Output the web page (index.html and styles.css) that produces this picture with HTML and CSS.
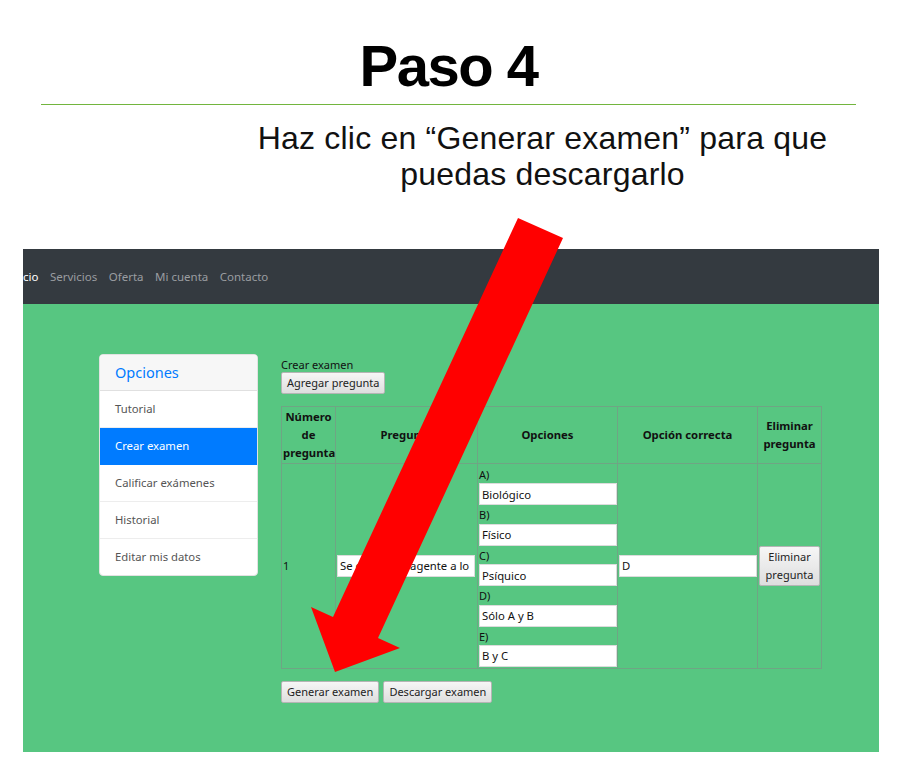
FILE: index.html
```html
<!DOCTYPE html>
<html lang="es">
<head>
<meta charset="utf-8">
<title>Paso 4</title>
<link rel="stylesheet" href="styles.css">
</head>
<body>
<div class="slide">
  <h1 class="title">Paso 4</h1>
  <div class="rule"></div>
  <p class="subtitle">Haz clic en “Generar examen” para que<br>puedas descargarlo</p>

  <div class="shot">
    <nav class="navbar">
      <span class="nav-link active">cio</span>
      <span class="nav-link">Servicios</span>
      <span class="nav-link">Oferta</span>
      <span class="nav-link">Mi cuenta</span>
      <span class="nav-link">Contacto</span>
    </nav>
    <main class="page">
      <aside class="card">
        <div class="card-header">Opciones</div>
        <div class="list-item">Tutorial</div>
        <div class="list-item current">Crear examen</div>
        <div class="list-item">Calificar exámenes</div>
        <div class="list-item">Historial</div>
        <div class="list-item">Editar mis datos</div>
      </aside>
      <section class="content">
        <div class="heading">Crear examen</div>
        <button class="btn">Agregar pregunta</button>
        <table class="exam">
          <colgroup>
            <col class="c1"><col class="c2"><col class="c3"><col class="c4"><col class="c5">
          </colgroup>
          <thead>
            <tr>
              <th>Número de pregunta</th>
              <th>Pregunta</th>
              <th>Opciones</th>
              <th>Opción correcta</th>
              <th>Eliminar pregunta</th>
            </tr>
          </thead>
          <tbody>
            <tr>
              <td>1</td>
              <td><input class="field" value="Se considera agente a lo"></td>
              <td class="opts">
                <div class="opt-label">A)</div><input class="field" value="Biológico">
                <div class="opt-label">B)</div><input class="field" value="Físico">
                <div class="opt-label">C)</div><input class="field" value="Psíquico">
                <div class="opt-label">D)</div><input class="field" value="Sólo A y B">
                <div class="opt-label">E)</div><input class="field" value="B y C">
              </td>
              <td><input class="field" value="D"></td>
              <td class="del"><button class="btn btn-del">Eliminar pregunta</button></td>
            </tr>
          </tbody>
        </table>
        <div class="actions">
          <button class="btn">Generar examen</button>
          <button class="btn">Descargar examen</button>
        </div>
      </section>
    </main>
  </div>

  <svg class="arrow" width="897" height="775" viewBox="0 0 897 775">
    <polygon points="518,218 563,238 378,638 400,648 335,672 311,607 333,617" fill="#ff0000"/>
  </svg>
</div>
</body>
</html>
```

FILE: styles.css
```css
html, body {
  margin: 0;
  padding: 0;
  background: #ffffff;
}

.slide {
  position: relative;
  width: 897px;
  height: 775px;
  overflow: hidden;
  font-family: "Liberation Sans", Arial, sans-serif;
}

.title {
  margin: 0;
  padding-top: 34px;
  height: 64px;
  text-align: center;
  font-family: "Liberation Sans", Arial, sans-serif;
  font-weight: bold;
  font-size: 58px;
  line-height: 64px;
  letter-spacing: -1.5px;
  color: #000;
}

.rule {
  margin: 6px 0 0 41px;
  width: 815px;
  height: 1px;
  background: #72b53e;
}

.subtitle {
  margin: 15px 0 0 188px;
  width: 709px;
  text-align: center;
  font-size: 32px;
  line-height: 36px;
  letter-spacing: 0.2px;
  color: #111;
}

.shot {
  margin: 57px 0 0 23px;
  width: 856px;
  height: 503px;
  display: flex;
  flex-direction: column;
  font-family: "Noto Sans", "Open Sans", sans-serif;
  font-size: 11px;
}

.navbar {
  height: 55px;
  background: #343a40;
  display: flex;
  align-items: center;
  gap: 11.5px;
  flex-shrink: 0;
}

.nav-link {
  color: #9a9da1;
  font-size: 11.5px;
}

.nav-link.active {
  color: #ffffff;
}

.page {
  flex: 1;
  background: #57c681;
  display: flex;
  align-items: flex-start;
  padding: 50px 0 0 76px;
  gap: 23px;
}

.card {
  box-sizing: border-box;
  width: 159px;
  background: #fff;
  border: 1px solid #e2e2e2;
  border-radius: 4px;
  overflow: hidden;
  flex-shrink: 0;
}

.card-header {
  height: 35px;
  line-height: 35px;
  padding-left: 15px;
  background: #f7f7f7;
  border-bottom: 1px solid #e0e0e0;
  color: #007bff;
  font-size: 14.5px;
}

.list-item {
  height: 36px;
  line-height: 36px;
  padding-left: 15px;
  color: #555;
  font-size: 11.3px;
  border-bottom: 1px solid #ededed;
}

.list-item:last-child {
  border-bottom: none;
}

.list-item.current {
  background: #007bff;
  color: #fff;
  border-bottom-color: #007bff;
}

.content {
  padding-top: 3px;
  display: flex;
  flex-direction: column;
  align-items: flex-start;
  color: #111;
}

.heading {
  height: 15px;
  line-height: 15px;
}

.btn {
  font-family: "Noto Sans", "Open Sans", sans-serif;
  font-size: 11px;
  color: #222;
  background: linear-gradient(#f6f6f6, #dedede);
  border: 1px solid #b5b5b5;
  border-radius: 2px;
  height: 22px;
  padding: 0 5px;
  line-height: 18px;
}

.exam {
  margin-top: 12px;
  width: 540px;
  table-layout: fixed;
  border-collapse: collapse;
  border: 1px solid #3d8c57;
}

.c1 { width: 54px; }
.c2 { width: 142px; }
.c3 { width: 140px; }
.c4 { width: 140px; }
.c5 { width: 64px; }

.exam th, .exam td {
  border: 1px solid #6fa584;
  padding: 1px;
}

.exam th {
  height: 53px;
  font-weight: bold;
  line-height: 18px;
  text-align: center;
  font-size: 11.3px;
}

.exam td {
  vertical-align: middle;
}

.field {
  display: block;
  box-sizing: border-box;
  width: 138px;
  height: 22px;
  margin: 0;
  padding: 0 2px;
  border: 1px solid #dcdcdc;
  background: #fff;
  font-family: "Noto Sans", "Open Sans", sans-serif;
  font-size: 11.3px;
  color: #111;
}

.opts {
  vertical-align: top;
}

.opt-label {
  height: 18.4px;
  line-height: 19px;
}

.del {
  text-align: center;
}

.btn-del {
  height: 40px;
  width: 61px;
  padding: 0 3px;
  line-height: 18px;
  white-space: normal;
}

.actions {
  margin-top: 12px;
  display: flex;
  gap: 4px;
}

.arrow {
  position: absolute;
  left: 0;
  top: 0;
  pointer-events: none;
}
```
